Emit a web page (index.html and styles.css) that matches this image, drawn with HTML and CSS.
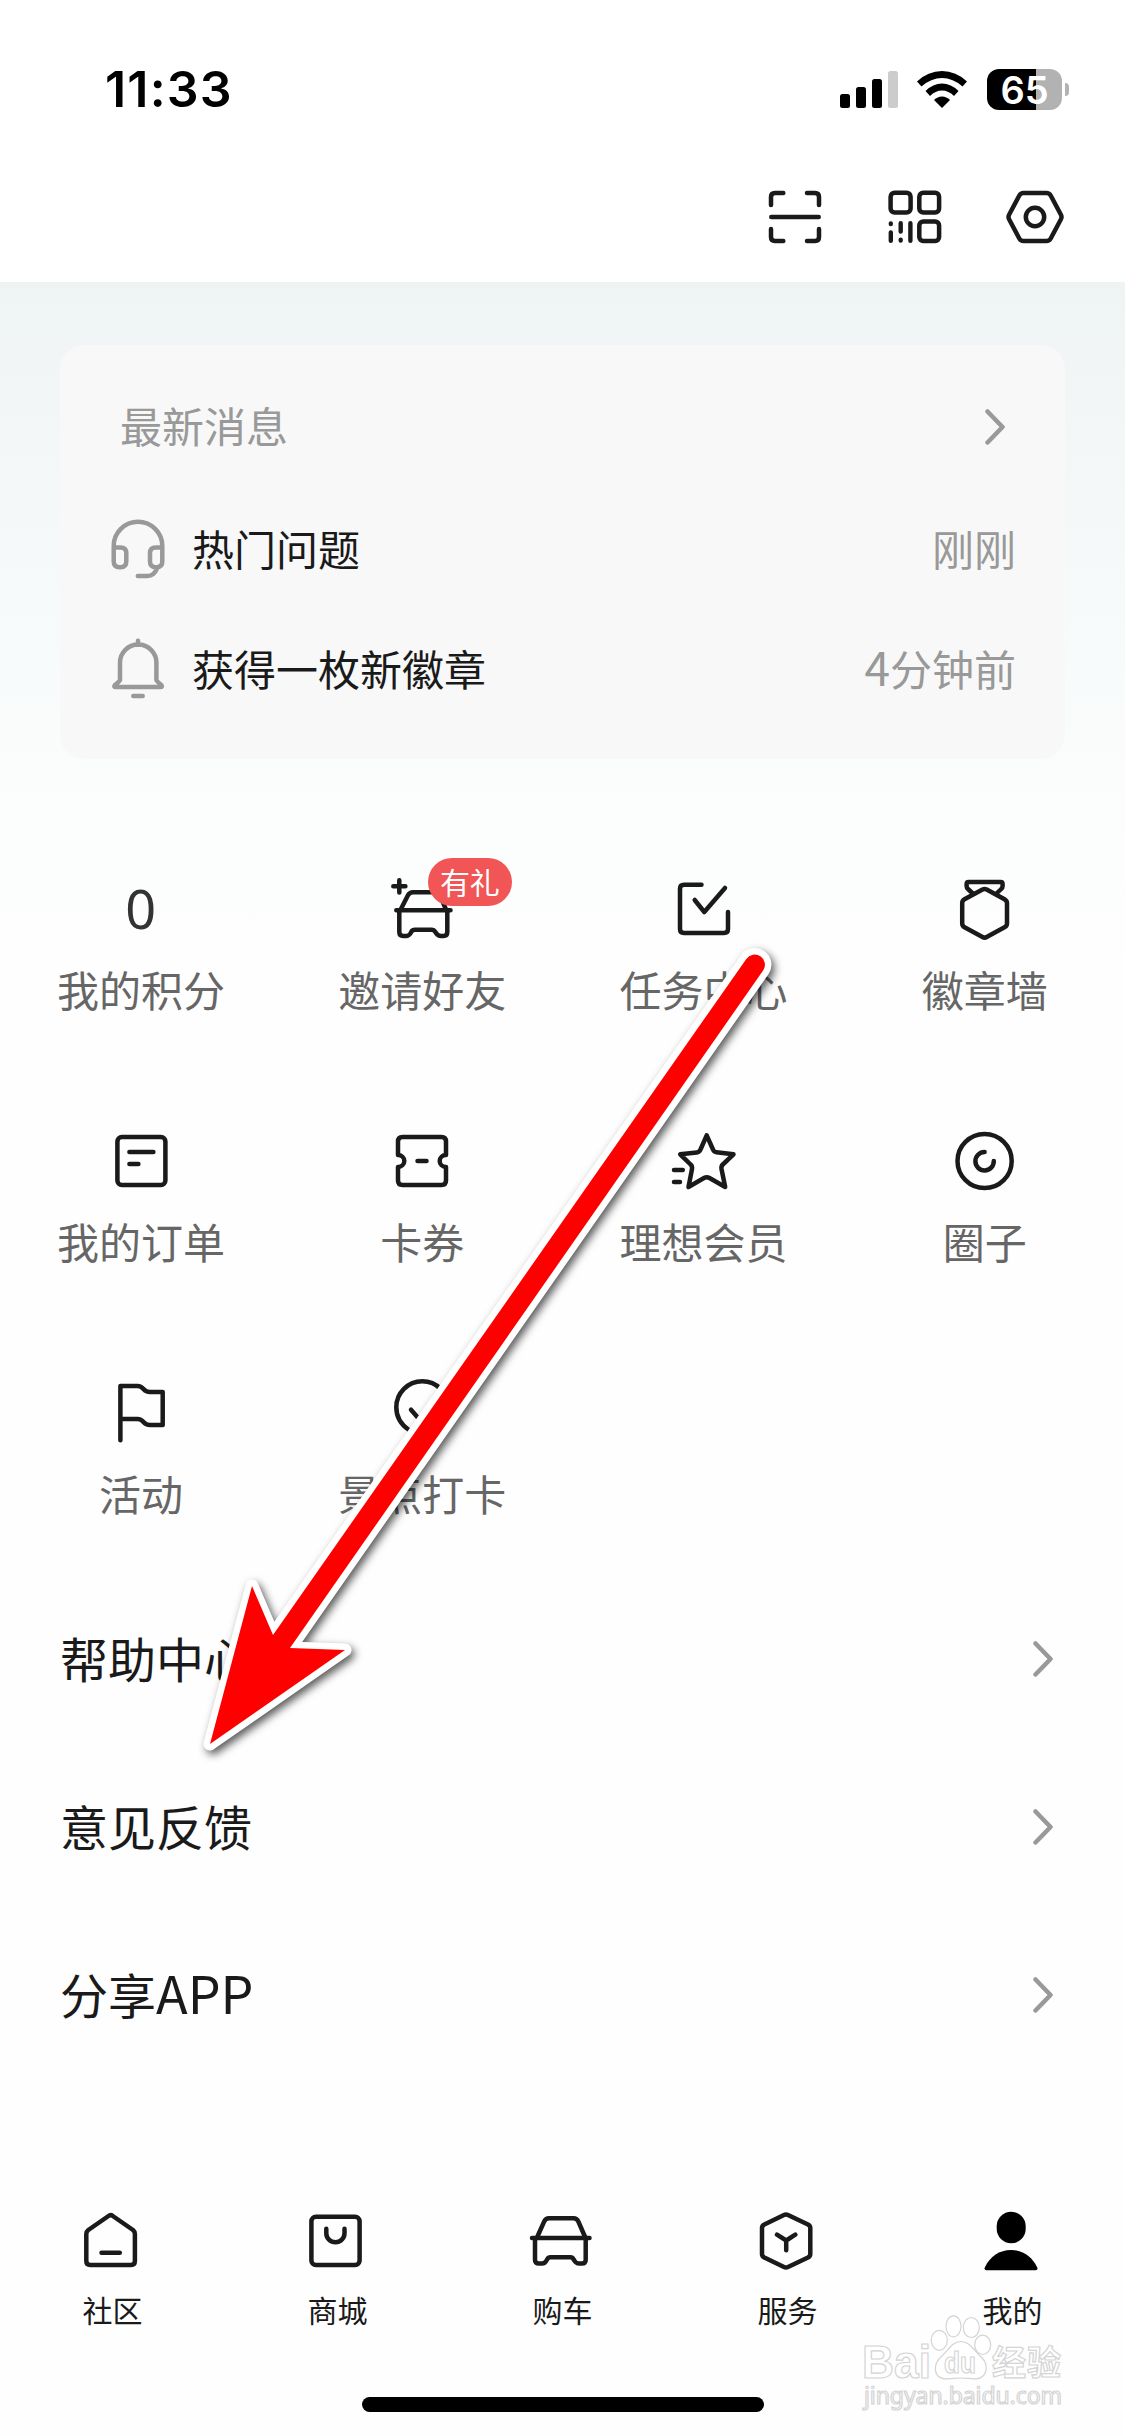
FILE: index.html
```html
<!DOCTYPE html>
<html lang="zh-CN">
<head>
<meta charset="utf-8">
<title>我的</title>
<link rel="stylesheet" href="styles.css">
</head>
<body>
<div class="screen">
  <header class="top">
    <div class="status">
      <span class="time">11:33</span>
      <div class="indicators">
        <svg class="signal" width="58" height="37" viewBox="0 0 58 37">
          <rect x="0" y="23" width="10" height="14" rx="2.5"/>
          <rect x="16" y="16" width="10" height="21" rx="2.5"/>
          <rect x="32" y="8" width="10" height="29" rx="2.5"/>
          <rect x="48" y="0" width="10" height="37" rx="2.5" fill="#ccc"/>
        </svg>
        <svg class="wifi" width="50" height="37" viewBox="0 0 50 37">
          <path d="M0 10.5Q11 0 25 0T50 10.5L45.500 15.500Q36 7 25 7T4.500 15.500Z"/>
          <path d="M8.500 20Q16 12.500 25 12.500T41.500 20L37 25Q31.500 19.500 25 19.500T13 25Z"/>
          <path d="M17 29Q20.500 25.500 25 25.500T33 29L25 37Z"/>
        </svg>
        <div class="battery"><span class="level">65</span><i class="cap"></i></div>
      </div>
    </div>
    <div class="tools">
      <svg class="icon" viewBox="0 0 60 60"><path d="M6 18V10Q6 6 10 6H18.300M42 6H50Q54 6 54 10V18M54 42V50Q54 54 50 54H42M18.300 54H10Q6 54 6 50V42M6.300 30H53.700"/></svg>
      <svg class="icon" viewBox="0 0 60 60"><rect x="5.600" y="5.700" width="20" height="19.800" rx="4"/><rect x="34.300" y="5.700" width="19.800" height="19.800" rx="4"/><rect x="34.300" y="34.400" width="19.800" height="19.700" rx="4"/><path stroke-width="4.400" d="M5.800 36.500V37M5.800 45.500V53.800M15.700 36.200V44.500M15.700 52.800V53.600M25.400 36.200V53.800"/></svg>
      <svg class="icon" viewBox="0 0 60 60"><path d="M4.200 32.500Q2.800 30 4.200 27.500L14.300 8.500Q15.800 5.900 18.500 5.900H41.500Q44.200 5.900 45.700 8.500L55.800 27.500Q57.200 30 55.800 32.500L45.700 51.500Q44.200 54.100 41.500 54.100H18.500Q15.800 54.100 14.300 51.500Z"/><circle cx="30" cy="30" r="9.200"/></svg>
    </div>
  </header>

  <main class="content">
    <section class="card">
      <div class="card-head">
        <span class="muted">最新消息</span>
        <svg class="chevron" viewBox="0 0 20 36"><path d="M2.500 2.500L17.500 18L2.500 33.500"/></svg>
      </div>
      <div class="message">
        <svg class="icon grey" viewBox="0 0 60 60"><path d="M5.700 28.500V26A24.300 24.300 0 0 1 54.300 26V28.500M5.700 27.400H12.500Q18.300 27.400 18.300 33V41.500Q18.300 47.200 12.500 47.200H11.500Q5.700 47.200 5.700 41.500ZM54.300 27.400H47.800Q42 27.400 42 33V41.500Q42 47.200 47.800 47.200H48.500Q54.300 47.200 54.300 41.500ZM49 48.500Q46 56 39.500 56H29.800"/></svg>
        <span class="subject">热门问题</span>
        <span class="muted">刚刚</span>
      </div>
      <div class="message">
        <svg class="icon grey" viewBox="0 0 60 60"><path d="M30 .7V4.800M12 40V22.800A18.200 18.200 0 0 1 48.400 22.800V40Q49 41.500 53.500 45.300Q54.500 47 53 47H7.200Q5.700 47 6.700 45.300Q11.300 41.500 12 40ZM25.300 56H34.700"/></svg>
        <span class="subject">获得一枚新徽章</span>
        <span class="muted"><span class="digit">4</span>分钟前</span>
      </div>
    </section>

    <nav class="grid">
      <div class="entry"><div class="figure points">0</div><span class="label">我的积分</span></div>
      <div class="entry">
        <div class="figure">
          <svg class="icon" viewBox="0 0 60 60"><path d="M1.300 6.300H13.400M7.300 .2V12.500M8.700 29.500L15.700 15.700Q17.500 12.300 21 12.300H43Q46.500 12.300 48 15.700L54 29.500M4.300 30.300H58.500M7.300 30.300V52Q7.300 56 11.300 56H14Q17 56 18.700 53L19.500 51.500Q20.500 49.800 23 49.800H40Q42 49.800 43 51.500L44 53Q46 56 49 56H51.500Q55.300 56 55.300 52V30.300"/></svg>
          <b class="badge">有礼</b>
        </div>
        <span class="label">邀请好友</span>
      </div>
      <div class="entry"><svg class="icon" viewBox="0 0 60 60"><path d="M28.500 4.700H11Q7 4.700 7 8.700V49Q7 53 11 53H51Q55 53 55 49V32M21.700 20L31.300 32L52 8"/></svg><span class="label">任务中心</span></div>
      <div class="entry"><svg class="icon" viewBox="0 0 60 60"><path d="M19.300 14L14 9Q12.600 7.800 12.600 6V4Q12.600 2 14.600 2H46.600Q48.600 2 48.600 4V6Q48.600 7.800 47.200 9L42 14M28.500 9.500Q30.600 8.300 32.700 9.500L50.500 19.200Q53 20.700 53 23V43.500Q53 46 50.500 47.300L32.700 57Q30.600 58.300 28.500 57L10.500 47.300Q8.200 46 8.200 43.500V23Q8.200 20.700 10.500 19.200Z"/></svg><span class="label">徽章墙</span></div>

      <div class="entry"><svg class="icon" viewBox="0 1 60 60"><rect x="6.400" y="6" width="48" height="48" rx="4.500"/><path d="M18.400 21H42.400M18.400 33H27.400"/></svg><span class="label">我的订单</span></div>
      <div class="entry"><svg class="icon" viewBox="0 1 60 60"><path d="M6 24V10.500Q6 6 10.500 6H49.500Q54 6 54 10.500V24A6.300 6 0 0 0 54 36V49.500Q54 54 49.500 54H10.500Q6 54 6 49.500V36A6.300 6 0 0 0 6 24ZM25.500 30H34.500"/></svg><span class="label">卡券</span></div>
      <div class="entry"><svg class="icon" viewBox="0 1 60 60"><path d="M33.700 4.300L40 18.500Q41 21 43.500 21.200L60.500 23.300L49.800 33.500Q48 35.200 48.500 38L52.200 56L36.500 47Q33.700 45.500 31 47L15.500 56L19 38Q19.500 35.200 17.600 33.500L7.200 23.300L23.800 21.500Q26.500 21.200 27.500 18.500ZM1 39H9.800M1 51H7"/></svg><span class="label">理想会员</span></div>
      <div class="entry"><svg class="icon" viewBox="0 1 60 60"><circle cx="30.600" cy="30" r="27.100"/><path d="M30.600 21A9.200 9.200 0 1 0 39.800 30"/></svg><span class="label">圈子</span></div>

      <div class="entry"><svg class="icon" viewBox="0 1 60 60"><path d="M9.400 57.300V3H26.500Q30 3 32.500 6Q35 9 39 9H51.700V42H39Q35 42 32.500 39Q30 36 26.500 36H9.400"/></svg><span class="label">活动</span></div>
      <div class="entry"><svg class="icon" viewBox="0 1 60 60"><path d="M17 47Q4.300 38.500 4.300 24.300A26 26 0 0 1 56.300 24.300Q56.300 38.500 43.500 47L30.300 57ZM19 26.700L27.500 36.500L42 17"/></svg><span class="label">景点打卡</span></div>
    </nav>

    <ul class="list">
      <li><span class="label">帮助中心</span><svg class="chevron" viewBox="0 0 20 36"><path d="M2.500 2.500L17.500 18L2.500 33.500"/></svg></li>
      <li><span class="label">意见反馈</span><svg class="chevron" viewBox="0 0 20 36"><path d="M2.500 2.500L17.500 18L2.500 33.500"/></svg></li>
      <li><span class="label">分享<span class="latin">APP</span></span><svg class="chevron" viewBox="0 0 20 36"><path d="M2.500 2.500L17.500 18L2.500 33.500"/></svg></li>
    </ul>
  </main>

  <footer class="bottom">
    <nav class="tabs">
      <div class="tab"><svg class="icon" viewBox="0 0 60 60"><path d="M26.500 4Q28.600 2.200 30.800 4L51 18Q52.900 19.600 52.900 22V49Q52.900 53 49 53H8.300Q4.300 53 4.300 49V22Q4.300 19.600 6.300 18ZM19.500 40.700H37.800"/></svg><span>社区</span></div>
      <div class="tab"><svg class="icon" viewBox="0 0 60 60"><rect x="4.400" y="4.700" width="48.200" height="48.300" rx="4.500"/><path d="M19.300 16.700V21.200A9.100 9.100 0 0 0 37.500 21.200V16.700"/></svg><span>商城</span></div>
      <div class="tab"><svg class="icon" viewBox="0 0 60 60"><path d="M5 25.500L12 9.800Q13.500 6.300 17 6.300H41.500Q45 6.300 46.500 9.800L53.300 25.500M0 26H57.500M3 26V47.700Q3 51.500 7 51.500H10Q13 51.500 14.500 48.500L15.200 47.200Q16.200 45.300 18.500 45.300H38.500Q40.500 45.300 41.500 47.200L42.300 48.500Q44 51.500 47 51.500H50Q53.700 51.500 53.700 47.700V26"/></svg><span>购车</span></div>
      <div class="tab"><svg class="icon" viewBox="0 0 60 60"><path d="M27 3Q29 2 31 3L51 12.500Q53.300 13.700 53.300 16V42Q53.300 44.300 51 45.500L31 55Q29 56 27 55L7.300 45.500Q5 44.300 5 42V16Q5 13.700 7.300 12.500ZM20 22.700L29.200 28.500L38.300 22.700M29.200 28.500V38.200"/></svg><span>服务</span></div>
      <div class="tab"><svg class="icon solid" viewBox="0 0 60 60"><rect x="14.700" y="-.3" width="29" height="31.600" rx="14.500"/><path d="M4.500 58.300Q1.500 58.300 3 55C8 44.500 17.500 38 29 38S50 44.500 55 55Q56.500 58.300 53.500 58.300Z"/></svg><span>我的</span></div>
    </nav>
    <div class="home-bar"></div>
  </footer>

  <svg class="watermark" width="210" height="110" viewBox="0 0 210 110">
    <g class="mark">
      <text x="2" y="68" font-size="46" textLength="69" lengthAdjust="spacingAndGlyphs">Bai</text>
      <ellipse cx="79.300" cy="30.300" rx="8" ry="10"/>
      <ellipse cx="93.500" cy="16.300" rx="7.500" ry="10.500"/>
      <ellipse cx="111.300" cy="17.500" rx="8" ry="10"/>
      <ellipse cx="122.700" cy="34.800" rx="8" ry="9.700"/>
      <path d="M101 31.500C92 31.500 88 41 81 47C75 52 73.500 61 78 66C83 71 93 68 101 68S118 71 123 66C128 61 127 52 121 47C114 41 110 31.500 101 31.500Z"/>
      <text x="84" y="63" font-size="29" textLength="32" lengthAdjust="spacingAndGlyphs">du</text>
      <text class="cn" x="132" y="65" font-size="34" textLength="69">经验</text>
    </g>
    <text class="mark url" x="4" y="94.300" font-size="23" textLength="198">jingyan.baidu.com</text>
  </svg>

  <svg class="arrow" width="1125" height="2436" viewBox="0 0 1125 2436">
    <path d="M746.300 958.900L273 1635L252 1586L210 1744L345 1650L290 1648L763.100 970.500A10.200 10.200 0 0 0 746.300 958.900Z"/>
  </svg>
</div>
</body>
</html>
```
FILE: styles.css
```css
* {
  box-sizing: border-box;
}

body {
  margin: 0;
  font-family: "Noto Sans CJK SC", sans-serif;
  color: #1a1a1a;
  background: #fefefe;
}

.screen {
  position: relative;
  display: flex;
  flex-direction: column;
  width: 1125px;
  height: 2436px;
  overflow: hidden;
}

.top {
  height: 282px;
  background: #fff;
}

.status {
  display: flex;
  justify-content: space-between;
  align-items: center;
  height: 178px;
  padding: 0 56px 0 105px;
}

.time {
  font: 600 50px/60px Inter, sans-serif;
  letter-spacing: 1.2px;
  color: #000;
}

.indicators {
  display: flex;
  align-items: center;
}

.wifi {
  margin: 0 20px 0 19px;
}

.battery {
  display: flex;
  align-items: center;
  gap: 3px;
}

.level {
  width: 75px;
  height: 41px;
  border-radius: 12px;
  background: linear-gradient(90deg, #000 49px, #b2b2b2 49px);
  color: #fff;
  font: 600 38px/42px Inter, sans-serif;
  text-align: center;
}

.cap {
  width: 4px;
  height: 13px;
  border-radius: 0 6px 6px 0;
  background: #b2b2b2;
}

.tools {
  display: flex;
  justify-content: flex-end;
  gap: 60px;
  margin-top: 9px;
  padding-right: 60px;
}

.icon {
  display: block;
  flex: none;
  width: 60px;
  height: 60px;
  overflow: visible;
  fill: none;
  stroke: #1a1a1a;
  stroke-width: 4.5;
  stroke-linecap: round;
  stroke-linejoin: round;
}

.icon.grey {
  stroke: #999;
}

.icon.solid {
  fill: #000;
  stroke: none;
}

.chevron {
  width: 20px;
  height: 36px;
  fill: none;
  stroke: #999;
  stroke-width: 4.5;
  stroke-linecap: round;
  stroke-linejoin: round;
}

.content {
  background: linear-gradient(180deg, #eef4f4 0, #f1f5f5 70px, #f5f9fa 270px, #fafcfc 450px, #fefefe 680px);
}

.card {
  margin: 63px 60px 0;
  height: 414px;
  padding: 52px 49px 0 48px;
  border-radius: 24px;
  background: #f8f8f8;
  font-size: 42px;
  line-height: 56px;
}

.card-head {
  display: flex;
  justify-content: space-between;
  align-items: center;
  height: 60px;
  padding: 0 11px 0 12px;
  margin-bottom: 63px;
}

.message {
  display: flex;
  align-items: center;
  gap: 24px;
  height: 60px;
  margin-bottom: 60px;
}

.subject {
  flex: 1;
  padding-bottom: 4px;
}

.muted {
  padding-bottom: 4px;
  color: #999;
}

.digit {
  font-size: 46px;
  line-height: 1;
}

.grid {
  display: grid;
  grid-template-columns: repeat(4, 1fr);
  row-gap: 111px;
  margin-top: 121px;
}

.entry {
  display: flex;
  flex-direction: column;
  align-items: center;
  gap: 21px;
  font-size: 42px;
  line-height: 56px;
  color: #666;
}

.label {
  padding-bottom: 4px;
}

.entry .label {
  padding-left: 1px;
}

.figure {
  position: relative;
  height: 60px;
}

.points {
  font: 400 54px/56px "Noto Sans", sans-serif;
  color: #333;
}

.badge {
  position: absolute;
  left: 36px;
  top: -22px;
  width: 84px;
  height: 48px;
  border-radius: 24px;
  background: #f25555;
  color: #fff;
  font-size: 30px;
  font-weight: 400;
  line-height: 46px;
  text-align: center;
}

.list {
  margin: 50px 0 0;
  padding: 0 72px 0 60px;
  list-style: none;
  font-size: 48px;
  line-height: 70px;
}

.list li {
  display: flex;
  justify-content: space-between;
  align-items: center;
  height: 168px;
}

.latin {
  font-size: 52px;
  line-height: 1;
}

.bottom {
  margin-top: auto;
  padding-bottom: 24px;
}

.tabs {
  display: grid;
  grid-template-columns: repeat(5, 1fr);
  margin-bottom: 68px;
}

.tab {
  display: flex;
  flex-direction: column;
  align-items: center;
  gap: 17px;
  font-size: 30px;
  line-height: 40px;
}

.tab .icon {
  margin-right: 2px;
}

.home-bar {
  width: 402px;
  height: 15px;
  margin: 0 auto;
  border-radius: 8px;
  background: #000;
}

.watermark {
  position: absolute;
  left: 860px;
  top: 2310px;
}

.mark {
  fill: #fff;
  stroke: #d4d4d4;
  stroke-width: 1.2;
  font-family: "Liberation Sans", sans-serif;
  font-weight: 700;
}

.mark .cn {
  font-family: "Noto Sans CJK SC", sans-serif;
}

.mark.url {
  font-family: "Noto Sans", sans-serif;
  font-weight: 400;
}

.arrow {
  position: absolute;
  left: 0;
  top: 0;
  fill: #f00;
  stroke: #fff;
  stroke-width: 13;
  stroke-linejoin: round;
  paint-order: stroke;
  filter: drop-shadow(3px 4px 4px rgba(0, 0, 0, 0.65));
  pointer-events: none;
}
```
